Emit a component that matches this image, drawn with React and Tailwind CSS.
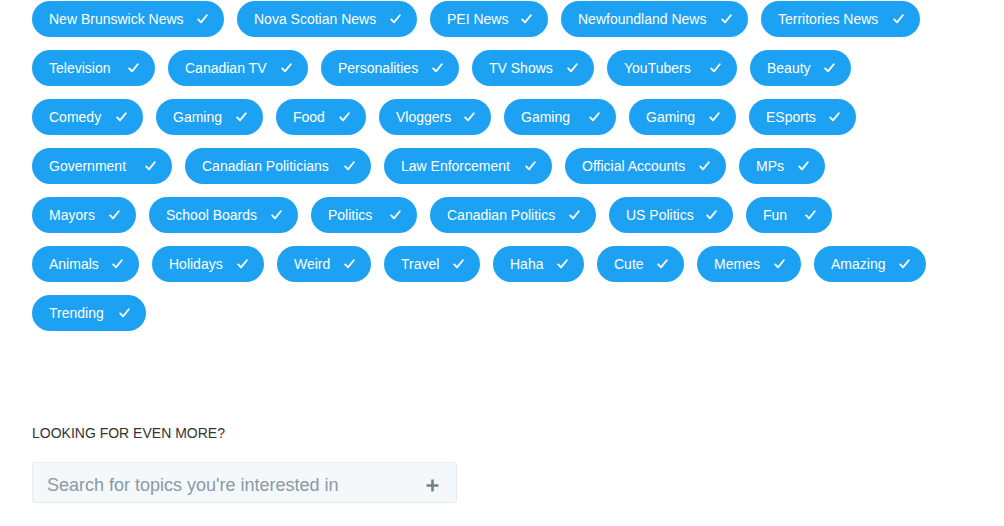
import React from "react";

// Topic picker — rows of selected blue pills, then a search box for more topics.
const ROWS = [
    [["New Brunswick News", "w-[192px]"], ["Nova Scotian News", "w-[180px]"], ["PEI News", "w-[118px]"], ["Newfoundland News", "w-[187px]"], ["Territories News", "w-[159px]"]],
    [["Television", "w-[123px]"], ["Canadian TV", "w-[140px]"], ["Personalities", "w-[138px]"], ["TV Shows", "w-[122px]"], ["YouTubers", "w-[130px]"], ["Beauty", "w-[101px]"]],
    [["Comedy", "w-[111px]"], ["Gaming", "w-[107px]"], ["Food", "w-[90px]"], ["Vloggers", "w-[112px]"], ["Gaming", "w-[112px]"], ["Gaming", "w-[107px]"], ["ESports", "w-[107px]"]],
    [["Government", "w-[140px]"], ["Canadian Politicians", "w-[186px]"], ["Law Enforcement", "w-[168px]"], ["Official Accounts", "w-[161px]"], ["MPs", "w-[86px]"]],
    [["Mayors", "w-[104px]"], ["School Boards", "w-[149px]"], ["Politics", "w-[106px]"], ["Canadian Politics", "w-[166px]"], ["US Politics", "w-[124px]"], ["Fun", "w-[86px]"]],
    [["Animals", "w-[107px]"], ["Holidays", "w-[112px]"], ["Weird", "w-[94px]"], ["Travel", "w-[96px]"], ["Haha", "w-[91px]"], ["Cute", "w-[87px]"], ["Memes", "w-[104px]"], ["Amazing", "w-[112px]"]],
    [["Trending", "w-[114px]"]],
];

function Check() {
    return (
        <svg width="11" height="10" viewBox="0 0 11 10" fill="none" className="shrink-0">
            <path d="M1.2 5.4 L4 8.4 L9.8 1.2" stroke="white" strokeWidth="1.8" strokeLinecap="round" strokeLinejoin="round" />
        </svg>
    );
}

function Pill({ label, w }) {
    return (
        <button className={`${w} h-9 shrink-0 rounded-full bg-[#1da1f2] text-white text-[14px] pl-[17px] pr-[16px] flex items-center justify-between whitespace-nowrap`}>
            <span>{label}</span>
            <Check />
        </button>
    );
}

export default function App() {
    return (
        <div className="w-[1004px] h-[526px] bg-white overflow-hidden px-8 pt-px" style={{ fontFamily: '"Liberation Sans", Arial, sans-serif' }}>
            <div className="flex flex-col gap-[13px]">
                {ROWS.map((row, r) => (
                    <div key={r} className="flex gap-[13px]">
                        {row.map(([t, w], i) => <Pill key={i} label={t} w={w} />)}
                    </div>
                ))}
            </div>

            <div className="mt-[93px] text-[14px] leading-[18px] text-[#333]">LOOKING FOR EVEN MORE?</div>

            <div className="mt-5 w-[425px] h-[41px] rounded-[3px] border border-[#e6ecf0] bg-[#f5f8fa] flex items-center pl-[14px] pr-[17px] pt-[5px]">
                <span className="flex-1 text-[18px] text-[#8a9aa6]">Search for topics you're interested in</span>
                <svg width="13" height="13" viewBox="0 0 13 13" className="shrink-0">
                    <path d="M6.5 0.5 V12.5 M0.5 6.5 H12.5" stroke="#71808c" strokeWidth="2.6" />
                </svg>
            </div>
        </div>
    );
}
